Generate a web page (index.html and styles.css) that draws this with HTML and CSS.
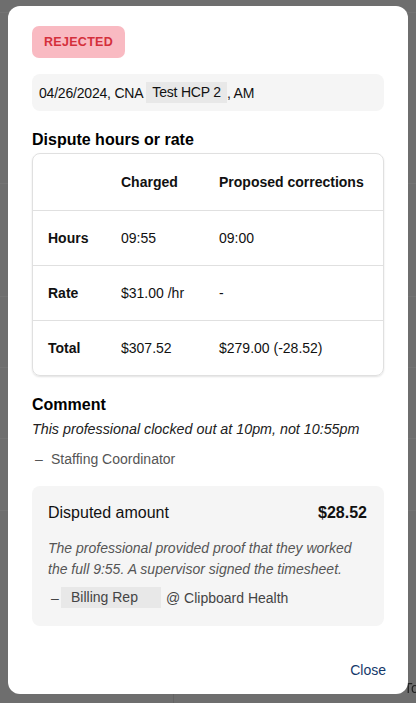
FILE: index.html
```html
<!DOCTYPE html>
<html>
<head>
<meta charset="utf-8">
<link rel="stylesheet" href="styles.css">
</head>
<body>
<div class="backdrop">
  <div class="bg-line l1"></div>
  <div class="bg-line l2"></div>
  <div class="bg-line l3"></div>
  <div class="bg-line l4"></div>
  <div class="bg-line l5"></div>
  <div class="bg-line l6"></div>
  <div class="bg-vline"></div>
  <span class="bg-text">To</span>
</div>
<div class="modal">
  <div class="badge">REJECTED</div>
  <div class="info">04/26/2024, CNA <span class="chip">Test HCP 2</span>, AM</div>
  <h2 class="heading">Dispute hours or rate</h2>
  <div class="table">
    <div class="row head">
      <div></div>
      <div>Charged</div>
      <div>Proposed corrections</div>
    </div>
    <div class="row">
      <div class="label">Hours</div>
      <div>09:55</div>
      <div>09:00</div>
    </div>
    <div class="row">
      <div class="label">Rate</div>
      <div>$31.00 /hr</div>
      <div>-</div>
    </div>
    <div class="row">
      <div class="label">Total</div>
      <div>$307.52</div>
      <div>$279.00 (-28.52)</div>
    </div>
  </div>
  <h2 class="heading comment-h">Comment</h2>
  <p class="comment">This professional clocked out at 10pm, not 10:55pm</p>
  <div class="author"><span class="dash">–</span>Staffing Coordinator</div>
  <div class="disputed">
    <div class="disp-top">
      <span>Disputed amount</span>
      <span class="amount">$28.52</span>
    </div>
    <p class="disp-text">The professional provided proof that they worked the full 9:55. A supervisor signed the timesheet.</p>
    <div class="disp-author"><span class="dash small">–</span><span class="chip rep">Billing Rep</span>@ Clipboard Health</div>
  </div>
  <div class="actions"><button class="close">Close</button></div>
</div>
</body>
</html>
```
FILE: styles.css
```css
html, body {
  margin: 0;
  padding: 0;
  width: 416px;
  height: 703px;
  overflow: hidden;
  font-family: "Liberation Sans", Arial, sans-serif;
  color: #111;
}
.backdrop {
  position: fixed;
  inset: 0;
  background: #6e6e6e;
}
.bg-line {
  position: absolute;
  left: 0;
  right: 0;
  height: 1px;
  background: #747474;
}
.l1 { top: 12px; }
.l2 { top: 183px; }
.l3 { top: 296px; }
.l4 { top: 367px; }
.l5 { top: 438px; }
.l6 { top: 510px; }
.bg-vline {
  position: absolute;
  left: 173px;
  top: 690px;
  bottom: 0;
  width: 1px;
  background: #646464;
}
.bg-text {
  position: absolute;
  left: 404px;
  top: 680px;
  font-size: 14px;
  color: #222;
}
.modal {
  position: absolute;
  left: 8px;
  top: 6px;
  width: 400px;
  height: 688px;
  box-sizing: border-box;
  background: #fff;
  border-radius: 12px;
  padding: 20px 24px 0;
  display: flex;
  flex-direction: column;
}
.badge {
  align-self: flex-start;
  height: 32px;
  line-height: 32px;
  padding: 0 12px;
  background: #f9bac2;
  color: #d42f3b;
  border-radius: 7px;
  font-size: 12.5px;
  font-weight: bold;
  letter-spacing: 0.3px;
}
.info {
  margin-top: 16px;
  height: 37px;
  display: flex;
  align-items: center;
  padding: 0 7px;
  background: #f5f5f5;
  border-radius: 8px;
  font-size: 14px;
  letter-spacing: -0.2px;
  white-space: pre;
}
.chip {
  display: inline-block;
  background: #e8e8e8;
  height: 21px;
  line-height: 21px;
  padding: 0 6px;
}
.heading {
  margin: 19px 0 3px;
  font-size: 16px;
  line-height: 20px;
  font-weight: bold;
  color: #000;
}
.table {
  border: 1px solid #e0e0e0;
  border-radius: 8px;
  box-shadow: 0 1px 2px rgba(0,0,0,0.12);
  overflow: hidden;
}
.row {
  display: grid;
  grid-template-columns: 73px 98px 1fr;
  padding: 0 15px;
  height: 54px;
  align-items: center;
  font-size: 14px;
  border-top: 1px solid #e0e0e0;
}
.row.head {
  border-top: none;
  height: 56px;
  font-weight: bold;
}
.label {
  font-weight: bold;
}
.comment-h {
  margin-top: 19px;
  margin-bottom: 4px;
}
.comment {
  margin: 0;
  font-size: 14.3px;
  line-height: 20px;
  font-style: italic;
  color: #222;
}
.author {
  margin-top: 10px;
  font-size: 14px;
  line-height: 20px;
  color: #555;
  display: flex;
  align-items: center;
}
.dash {
  display: inline-block;
  width: 19px;
  padding-left: 3px;
  box-sizing: border-box;
}
.disputed {
  margin-top: 17px;
  background: #f5f5f5;
  border-radius: 8px;
  padding: 17px 17px 18px 16px;
}
.disp-top {
  display: flex;
  justify-content: space-between;
  font-size: 16px;
  line-height: 20px;
}
.amount {
  font-weight: bold;
}
.disp-text {
  margin: 15px 0 0;
  font-size: 14px;
  line-height: 21px;
  font-style: italic;
  color: #555;
}
.disp-author {
  margin-top: 7px;
  font-size: 14px;
  color: #444;
  display: flex;
  align-items: center;
}
.dash.small {
  width: 13px;
  padding-left: 3px;
}
.chip.rep {
  width: 100px;
  box-sizing: border-box;
  padding: 0 10px;
  margin-right: 5px;
}
.actions {
  margin-top: auto;
  margin-bottom: 16px;
  display: flex;
  justify-content: flex-end;
}
.close {
  background: none;
  border: none;
  padding: 0;
  margin-right: -2px;
  font-family: "Liberation Sans", Arial, sans-serif;
  font-size: 14px;
  color: #14386a;
  height: 16px;
  line-height: 16px;
}
```
